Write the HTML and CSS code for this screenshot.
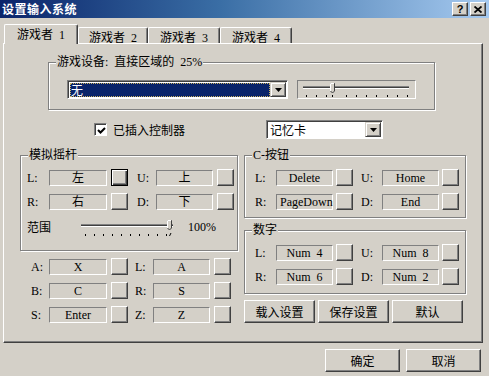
FILE: index.html
```html
<!DOCTYPE html>
<html lang="zh-CN">
<head>
<title>设置输入系统</title>
<meta charset="utf-8">
<link rel="stylesheet" href="styles.css">
</head>
<body>

<div class="dialog">
	<div class="titlebar">
		<span class="title">设置输入系统</span>
		<span class="cap_btns">
			<span class="cap_btn">?</span>
			<span class="cap_btn"><svg width="8" height="7" viewBox="0 0 8 7"><path d="M0.5 0.5 L7.5 6.5 M7.5 0.5 L0.5 6.5" stroke="#000" stroke-width="1.8"/></svg></span>
		</span>
	</div>

	<div class="tabs">
		<span class="tab tab_on">游戏者 1</span>
		<span class="tab tab_2">游戏者 2</span>
		<span class="tab tab_3">游戏者 3</span>
		<span class="tab tab_4">游戏者 4</span>
	</div>

	<div class="page">
		<fieldset class="grp grp_dev">
			<legend>游戏设备: 直接区域的 25%</legend>
			<div class="dev_row">
				<div class="combo combo_dev">
					<span class="combo_txt"><span class="sel_txt">无</span></span>
					<span class="combo_btn"><svg width="7" height="4" viewBox="0 0 7 4"><polygon points="0,0 7,0 3.5,4" fill="#000"/></svg></span>
				</div>
				<div class="slider_box">
					<svg width="117" height="17" viewBox="0 0 117 17">
						<line x1="5" y1="5.5" x2="111" y2="5.5" stroke="#808080"/>
						<line x1="5" y1="6.5" x2="111" y2="6.5" stroke="#404040"/>
						<line x1="5" y1="7.5" x2="111" y2="7.5" stroke="#fff"/>
						<path d="M32.5 2.5 H36.5 V10 L34.5 12 L32.5 10 Z" fill="#d4d0c8" stroke="#404040"/>
						<path d="M32.5 10 V2.5 H36" fill="none" stroke="#fff"/>
						<g stroke="#000">
							<line x1="8.5" y1="14" x2="8.5" y2="16"/><line x1="18.5" y1="14" x2="18.5" y2="16"/>
							<line x1="28.5" y1="14" x2="28.5" y2="16"/><line x1="34.5" y1="14" x2="34.5" y2="16"/>
							<line x1="48.5" y1="14" x2="48.5" y2="16"/><line x1="58.5" y1="14" x2="58.5" y2="16"/>
							<line x1="68.5" y1="14" x2="68.5" y2="16"/><line x1="78.5" y1="14" x2="78.5" y2="16"/>
							<line x1="89.5" y1="14" x2="89.5" y2="16"/><line x1="99.5" y1="14" x2="99.5" y2="16"/>
							<line x1="109.5" y1="14" x2="109.5" y2="16"/>
						</g>
					</svg>
				</div>
			</div>
		</fieldset>

		<div class="plug_row">
			<label class="chk">
				<span class="chk_box"><svg width="9" height="9" viewBox="0 0 9 9"><polyline points="1,4 3.5,6.5 8,2" fill="none" stroke="#000" stroke-width="2"/></svg></span>
				已插入控制器
			</label>
			<div class="combo combo_mem">
				<span class="combo_txt">记忆卡</span>
				<span class="combo_btn"><svg width="7" height="4" viewBox="0 0 7 4"><polygon points="0,0 7,0 3.5,4" fill="#000"/></svg></span>
			</div>
		</div>

		<div class="cols">
			<div class="col_left">
				<fieldset class="grp grp_stick">
					<legend>模拟摇杆</legend>
					<div class="key_row">
						<span class="lbl">L:</span><span class="fld">左</span><span class="kbtn kbtn_focus"></span>
						<span class="lbl lbl_2">U:</span><span class="fld fld_2">上</span><span class="kbtn"></span>
					</div>
					<div class="key_row">
						<span class="lbl">R:</span><span class="fld">右</span><span class="kbtn"></span>
						<span class="lbl lbl_2">D:</span><span class="fld fld_2">下</span><span class="kbtn"></span>
					</div>
					<div class="range_row">
						<span class="range_lbl">范围</span>
						<svg class="range_bar" width="100" height="20" viewBox="0 0 100 20">
							<line x1="3" y1="6.5" x2="95" y2="6.5" stroke="#808080"/>
							<line x1="3" y1="7.5" x2="95" y2="7.5" stroke="#404040"/>
							<line x1="3" y1="8.5" x2="95" y2="8.5" stroke="#fff"/>
							<path d="M89.5 2.5 H93.5 V10 L91.5 12 L89.5 10 Z" fill="#d4d0c8" stroke="#404040"/>
							<path d="M89.5 10 V2.5 H93" fill="none" stroke="#fff"/>
							<g stroke="#000">
								<line x1="7.5" y1="16" x2="7.5" y2="18"/><line x1="16.5" y1="16" x2="16.5" y2="18"/>
								<line x1="25.5" y1="16" x2="25.5" y2="18"/><line x1="34.5" y1="16" x2="34.5" y2="18"/>
								<line x1="43.5" y1="16" x2="43.5" y2="18"/><line x1="52.5" y1="16" x2="52.5" y2="18"/>
								<line x1="61.5" y1="16" x2="61.5" y2="18"/><line x1="70.5" y1="16" x2="70.5" y2="18"/>
								<line x1="79.5" y1="16" x2="79.5" y2="18"/><line x1="88.5" y1="16" x2="88.5" y2="18"/>
								<line x1="93" y1="15" x2="91.5" y2="18"/>
							</g>
						</svg>
						<span class="range_val">100%</span>
					</div>
				</fieldset>

				<div class="keys">
					<div class="key_row">
						<span class="lbl">A:</span><span class="fld">X</span><span class="kbtn"></span>
						<span class="lbl lbl_2">L:</span><span class="fld fld_2">A</span><span class="kbtn"></span>
					</div>
					<div class="key_row">
						<span class="lbl">B:</span><span class="fld">C</span><span class="kbtn"></span>
						<span class="lbl lbl_2">R:</span><span class="fld fld_2">S</span><span class="kbtn"></span>
					</div>
					<div class="key_row">
						<span class="lbl">S:</span><span class="fld">Enter</span><span class="kbtn"></span>
						<span class="lbl lbl_2">Z:</span><span class="fld fld_2">Z</span><span class="kbtn"></span>
					</div>
				</div>
			</div>

			<div class="col_right">
				<fieldset class="grp grp_c">
					<legend>C-按钮</legend>
					<div class="key_row">
						<span class="lbl">L:</span><span class="fld">Delete</span><span class="kbtn"></span>
						<span class="lbl lbl_2">U:</span><span class="fld">Home</span><span class="kbtn"></span>
					</div>
					<div class="key_row">
						<span class="lbl">R:</span><span class="fld fld_left">PageDown</span><span class="kbtn"></span>
						<span class="lbl lbl_2">D:</span><span class="fld">End</span><span class="kbtn"></span>
					</div>
				</fieldset>
				<fieldset class="grp grp_num">
					<legend>数字</legend>
					<div class="key_row">
						<span class="lbl">L:</span><span class="fld">Num 4</span><span class="kbtn"></span>
						<span class="lbl lbl_2">U:</span><span class="fld">Num 8</span><span class="kbtn"></span>
					</div>
					<div class="key_row">
						<span class="lbl">R:</span><span class="fld">Num 6</span><span class="kbtn"></span>
						<span class="lbl lbl_2">D:</span><span class="fld">Num 2</span><span class="kbtn"></span>
					</div>
				</fieldset>
				<div class="btn_row">
					<span class="btn">载入设置</span>
					<span class="btn">保存设置</span>
					<span class="btn">默认</span>
				</div>
			</div>
		</div>
	</div>

	<div class="foot">
		<span class="btn btn_foot">确定</span>
		<span class="btn btn_foot">取消</span>
	</div>
</div>

</body>
</html>
```

FILE: styles.css
```css
body,div,span,fieldset,legend,label{margin:0;padding:0;}
body{width:489px;height:376px;overflow:hidden;background:#d4d0c8;font-family:"Liberation Serif","Noto Sans CJK SC",serif;font-size:12px;color:#000;word-spacing:3px;}
/**/
.dialog{width:489px;height:376px;background:#d4d0c8;}
.titlebar{display:flex;align-items:center;justify-content:space-between;height:18px;padding:0 3px 0 2px;background:linear-gradient(to right,#0a246a,#3a6ea5 45%,#a6caf0);box-sizing:border-box;}
.title{color:#fff;font-family:"Noto Sans CJK SC",sans-serif;font-weight:bold;font-size:12px;line-height:18px;letter-spacing:0.5px;}
.cap_btns{display:flex;gap:2px;}
.cap_btn{display:flex;align-items:center;justify-content:center;width:16px;height:14px;box-sizing:border-box;border:1px solid;border-color:#fff #404040 #404040 #fff;box-shadow:inset -1px -1px #808080;background:#d4d0c8;font-family:"Liberation Sans",sans-serif;font-weight:bold;font-size:11px;line-height:12px;}

.tabs{display:flex;align-items:flex-end;height:19px;margin-top:6px;padding-left:4px;}
.tab{position:relative;display:flex;align-items:center;justify-content:center;height:16px;box-sizing:border-box;border-top:1px solid #fff;border-left:1px solid #fff;border-right:1px solid #404040;border-radius:2px 2px 0 0;box-shadow:inset -1px 0 #808080;background:#d4d0c8;}
.tab_on{z-index:1;width:74px;height:20px;margin-bottom:-1px;padding-bottom:1px;}
.tab_2{width:70px;padding-top:2px;}
.tab_3{width:72px;padding-top:2px;}
.tab_4{width:72px;padding-top:2px;}

.page{width:480px;height:300px;margin-left:3px;box-sizing:border-box;border:1px solid;border-color:#fff #404040 #404040 #fff;box-shadow:inset -1px -1px #808080;}

.grp{display:block;min-width:0;box-sizing:border-box;border:1px solid #808080;box-shadow:inset 1px 1px #fff,1px 1px #fff;}
.grp legend{margin-left:7px;padding:0 1px;height:14px;line-height:14px;background:#d4d0c8;}
.grp_dev{width:387px;height:55px;margin:11px 0 0 44px;}
.dev_row{display:flex;gap:9px;margin:11px 0 0 18px;}

.combo{display:flex;align-items:center;height:19px;box-sizing:border-box;border:1px solid;border-color:#808080 #fff #fff #808080;box-shadow:inset 1px 1px #404040;background:#fff;padding:2px 2px 2px 2px;}
.combo_txt{flex:1;height:14px;line-height:14px;font-family:"Noto Sans CJK SC",sans-serif;}
.combo_dev{width:221px;}
.combo_dev .combo_txt{background:#0a246a;outline:1px dotted #c8b060;outline-offset:-1px;color:#fff;padding-left:1px;}
.combo_btn{display:flex;align-items:center;justify-content:center;width:16px;height:15px;margin-right:-1px;box-sizing:border-box;border:1px solid;border-color:#d4d0c8 #404040 #404040 #d4d0c8;box-shadow:inset 1px 1px #fff,inset -1px -1px #808080;background:#d4d0c8;}
.slider_box{width:119px;height:19px;box-sizing:border-box;border:1px solid;border-color:#808080 #fff #fff #808080;}
.slider_box svg{display:block;}

.plug_row{display:flex;align-items:center;height:19px;margin-top:10px;}
.chk{display:flex;align-items:center;gap:6px;width:172px;margin-left:90px;font-family:"Noto Sans CJK SC",sans-serif;}
.chk_box{display:flex;align-items:center;justify-content:center;width:13px;height:13px;box-sizing:border-box;border:1px solid;border-color:#808080 #fff #fff #808080;box-shadow:inset 1px 1px #404040;background:#fff;padding:1px 0 0 1px;}
.combo_mem{width:117px;padding-left:3px;}

.cols{display:flex;margin-top:9px;}
.col_left{width:218px;margin-left:16px;}
.col_right{width:222px;margin-left:6px;}
.grp_stick{width:218px;height:103px;}
.grp_c{width:222px;height:70px;}
.grp_num{width:222px;height:71px;margin-top:5px;}

.key_row{display:flex;align-items:center;height:17px;margin-top:7px;}
.lbl{width:22px;padding-left:6px;line-height:14px;}
.lbl_2{width:19px;padding-left:9px;}
.fld{display:flex;align-items:center;justify-content:center;width:58px;height:16px;box-sizing:border-box;border:1px solid;border-color:#808080 #fff #fff #808080;line-height:14px;white-space:nowrap;}
.fld_2{width:57px;}
.fld_left{justify-content:flex-start;padding-left:3px;}
.kbtn{width:17px;height:17px;margin-left:4px;box-sizing:border-box;border:1px solid;border-color:#fff #404040 #404040 #fff;box-shadow:inset -1px -1px #808080;background:#d4d0c8;}
.kbtn_focus{border-color:#000;box-shadow:inset 1px 1px #fff,inset -1px -1px #404040,inset -2px -2px #808080;}

.grp_c .lbl,.grp_num .lbl{width:21px;padding-left:10px;}
.grp_c .lbl_2,.grp_num .lbl_2{width:21px;padding-left:8px;}
.grp_c .fld,.grp_num .fld{width:57px;}
.grp_c .kbtn,.grp_num .kbtn{margin-left:3px;}

.range_row{display:flex;align-items:flex-start;height:24px;margin-top:7px;}
.range_lbl{width:51px;padding-left:6px;margin-top:3px;line-height:14px;font-family:"Noto Sans CJK SC",sans-serif;}
.range_bar{display:block;margin-top:1px;}
.range_val{margin:3px 0 0 10px;line-height:14px;}

.keys{padding-left:4px;padding-top:0;}
.keys .key_row{margin-top:7px;}
.keys .lbl{width:18px;padding-left:7px;}

.btn_row{display:flex;gap:3px;margin-top:6px;}
.btn{display:flex;align-items:center;justify-content:center;width:71px;height:23px;box-sizing:border-box;border:1px solid;border-color:#fff #404040 #404040 #fff;box-shadow:inset -1px -1px #808080;background:#d4d0c8;font-family:"Noto Sans CJK SC",sans-serif;}

.foot{display:flex;justify-content:flex-end;gap:6px;margin-top:6px;padding-right:8px;}
.btn_foot{width:75px;}
```
